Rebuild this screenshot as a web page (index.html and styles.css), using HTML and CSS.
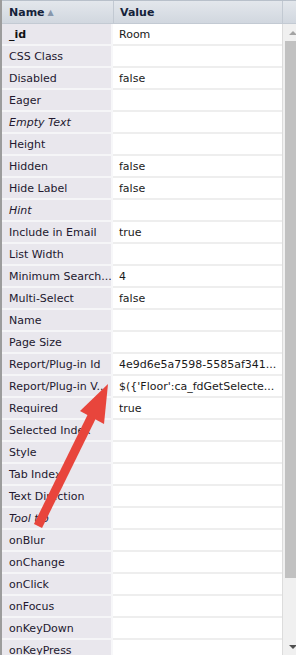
FILE: index.html
```html
<!DOCTYPE html>
<html>
<head>
<meta charset="utf-8">
<link rel="stylesheet" href="styles.css">
</head>
<body>
<div class="panel">
  <div class="header">
    <div class="hcell hname">Name <span class="sort">&#9650;</span></div>
    <div class="hcell hvalue">Value</div>
    <div class="hcell hpad"></div>
  </div>
  <div class="body">
    <div class="rows">
      <div class="row"><div class="name bold">_id</div><div class="value">Room</div></div>
      <div class="row"><div class="name">CSS Class</div><div class="value"></div></div>
      <div class="row"><div class="name">Disabled</div><div class="value">false</div></div>
      <div class="row"><div class="name">Eager</div><div class="value"></div></div>
      <div class="row"><div class="name ital">Empty Text</div><div class="value"></div></div>
      <div class="row"><div class="name">Height</div><div class="value"></div></div>
      <div class="row"><div class="name">Hidden</div><div class="value">false</div></div>
      <div class="row"><div class="name">Hide Label</div><div class="value">false</div></div>
      <div class="row"><div class="name ital">Hint</div><div class="value"></div></div>
      <div class="row"><div class="name">Include in Email</div><div class="value">true</div></div>
      <div class="row"><div class="name">List Width</div><div class="value"></div></div>
      <div class="row"><div class="name">Minimum Search...</div><div class="value">4</div></div>
      <div class="row"><div class="name">Multi-Select</div><div class="value">false</div></div>
      <div class="row"><div class="name">Name</div><div class="value"></div></div>
      <div class="row"><div class="name">Page Size</div><div class="value"></div></div>
      <div class="row"><div class="name">Report/Plug-in Id</div><div class="value">4e9d6e5a7598-5585af341...</div></div>
      <div class="row"><div class="name">Report/Plug-in V...</div><div class="value">$({'Floor':ca_fdGetSelecte...</div></div>
      <div class="row"><div class="name">Required</div><div class="value">true</div></div>
      <div class="row"><div class="name">Selected Index</div><div class="value"></div></div>
      <div class="row"><div class="name">Style</div><div class="value"></div></div>
      <div class="row"><div class="name">Tab Index</div><div class="value"></div></div>
      <div class="row"><div class="name">Text Direction</div><div class="value"></div></div>
      <div class="row"><div class="name ital">Tool tip</div><div class="value"></div></div>
      <div class="row"><div class="name">onBlur</div><div class="value"></div></div>
      <div class="row"><div class="name">onChange</div><div class="value"></div></div>
      <div class="row"><div class="name">onClick</div><div class="value"></div></div>
      <div class="row"><div class="name">onFocus</div><div class="value"></div></div>
      <div class="row"><div class="name">onKeyDown</div><div class="value"></div></div>
      <div class="row"><div class="name">onKeyPress</div><div class="value"></div></div>
    </div>
    <div class="scrollbar">
      <div class="sbtn"><span class="tri-up"></span></div>
      <div class="thumb"></div>
      <div class="sfill"></div>
      <div class="sbtn"><span class="tri-down"></span></div>
    </div>
  </div>
  <svg class="arrow" width="296" height="655" viewBox="0 0 296 655">
    <line x1="93" y1="414" x2="38" y2="526" stroke="#e8453c" stroke-width="9"/>
    <polygon points="108,384 80,411 104,424" fill="#e8453c"/>
  </svg>
</div>
</body>
</html>
```

FILE: styles.css
```css
html, body {
  margin: 0;
  padding: 0;
}
body {
  width: 296px;
  height: 655px;
  overflow: hidden;
  background: #fff;
  font-family: "DejaVu Sans", Verdana, sans-serif;
  font-size: 11px;
  color: #222;
}
.panel {
  position: relative;
  height: 655px;
  border-left: 2px solid #9c9c9c;
  box-sizing: border-box;
  display: flex;
  flex-direction: column;
}
.header {
  height: 24px;
  box-sizing: border-box;
  border-top: 1px solid #b8c0ca;
  border-bottom: 1px solid #c3cad3;
  background: linear-gradient(#e3e7ec, #d1d7df);
  display: grid;
  grid-template-columns: 112px 169px 1fr;
  flex: none;
}
.hcell {
  display: flex;
  align-items: center;
  font-weight: bold;
  color: #15223a;
  border-right: 1px solid #c2c9d2;
  white-space: nowrap;
}
.hname {
  padding-left: 7px;
}
.hvalue {
  padding-left: 6px;
}
.hpad {
  border-right: none;
}
.sort {
  font-size: 8px;
  color: #8797ac;
  margin-left: 3px;
  font-weight: normal;
}
.body {
  flex: 1;
  display: flex;
  min-height: 0;
}
.rows {
  width: 281px;
  flex: none;
  border-right: 1px solid #dcdcdc;
  box-sizing: border-box;
  overflow: hidden;
}
.row {
  display: grid;
  grid-template-columns: 111px 1fr;
  height: 22px;
}
.name, .value {
  box-sizing: border-box;
  height: 22px;
  display: flex;
  align-items: center;
  white-space: nowrap;
  overflow: hidden;
}
.name {
  background: #e9e7ed;
  padding-left: 7px;
  border-bottom: 2px solid #f5f5f7;
  border-right: 2px solid #f7f7f9;
  color: #23182f;
}
.value {
  padding-left: 6px;
  border-bottom: 2px solid #eeeeee;
  color: #1a1a1a;
}
.bold {
  font-weight: bold;
  color: #111;
}
.ital {
  font-style: italic;
}
.scrollbar {
  flex: 1;
  background: #f0f0f0;
  display: flex;
  flex-direction: column;
  padding-left: 2px;
}
.sbtn {
  height: 17px;
  flex: none;
  display: flex;
  align-items: center;
  padding-left: 4px;
}
.tri-up {
  width: 0;
  height: 0;
  border-left: 4px solid transparent;
  border-right: 4px solid transparent;
  border-bottom: 4px solid #a3a3a3;
}
.tri-down {
  width: 0;
  height: 0;
  border-left: 4px solid transparent;
  border-right: 4px solid transparent;
  border-top: 4px solid #505050;
}
.thumb {
  height: 537px;
  background: #c1c1c1;
  flex: none;
}
.sfill {
  flex: 1;
}
.arrow {
  position: absolute;
  left: -2px;
  top: 0;
  pointer-events: none;
}
```
